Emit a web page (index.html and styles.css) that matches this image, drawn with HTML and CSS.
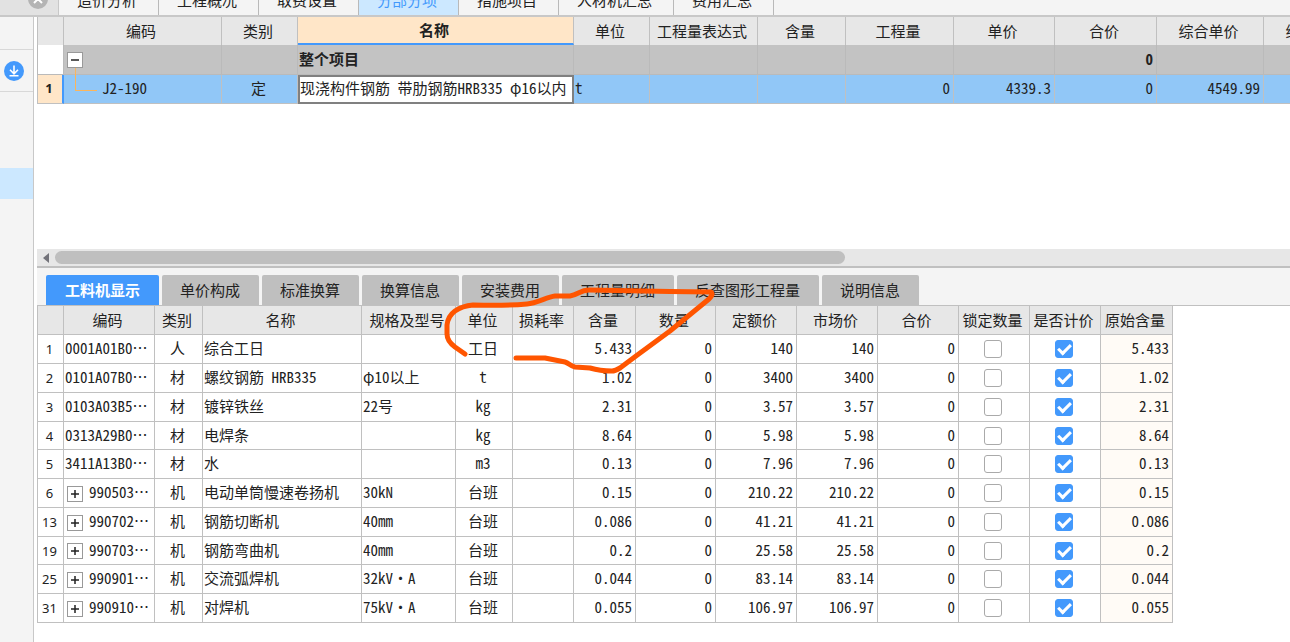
FILE: index.html
```html
<!DOCTYPE html>
<html lang="zh-CN">
<head>
<meta charset="utf-8">
<title>分部分项</title>
<link rel="stylesheet" href="styles.css">
</head>
<body>
<nav class="topbar">
  <span class="topbar-end"><button class="close" aria-label="关闭"><svg width="20" height="20" viewBox="0 0 20 20"><circle cx="10" cy="10" r="10" fill="#b4b4b4"/><path d="M6 6l8 8M14 6l-8 8" stroke="#fff" stroke-width="2"/></svg></button></span>
  <button class="toptab">造价分析</button>
  <button class="toptab">工程概况</button>
  <button class="toptab">取费设置</button>
  <button class="toptab current">分部分项</button>
  <button class="toptab">措施项目</button>
  <button class="toptab">人材机汇总</button>
  <button class="toptab">费用汇总</button>
</nav>
<div class="workspace">
  <aside class="side">
    <div class="side-head"></div>
    <div class="side-tool"><button class="download" aria-label="下载"><svg width="20" height="20" viewBox="0 0 20 20"><circle cx="10" cy="10" r="10" fill="#4399fc"/><path d="M10 4.500v8M6 8.800l4 4 4-4M5.500 14.800h9" fill="none" stroke="#fff" stroke-width="1.600"/></svg></button></div>
    <div class="side-gap"></div>
    <div class="side-selected"></div>
  </aside>
  <main class="main">
    <section class="upper">
      <table class="grid items">
        <colgroup><col class="w27"><col class="w158"><col class="w76"><col class="w276"><col class="w76"><col class="w108"><col class="w88"><col class="w108"><col class="w101"><col class="w102"><col class="w107"><col class="w107"></colgroup>
        <thead><tr><th></th><th>编码</th><th>类别</th><th class="sorted">名称</th><th>单位</th><th>工程量表达式</th><th>含量</th><th>工程量</th><th>单价</th><th>合价</th><th>综合单价</th><th>综合合价</th></tr></thead>
        <tbody>
          <tr class="total"><td class="idx"></td><td><button class="toggle open" aria-label="折叠"><svg width="14" height="14" viewBox="0 0 14 14"><path d="M3 7h8" stroke="#222" stroke-width="1.500"/></svg></button></td><td></td><td>整个项目</td><td></td><td></td><td></td><td></td><td></td><td class="n">0</td><td></td><td></td></tr>
          <tr class="active"><td class="idx">1</td><td class="leaf">J2-190</td><td class="c">定</td><td class="editing">现浇构件钢筋 带肋钢筋HRB335 φ16以内</td><td>t</td><td></td><td></td><td class="n">0</td><td class="n">4339.3</td><td class="n">0</td><td class="n">4549.99</td><td></td></tr>
        </tbody>
      </table>
    </section>
    <div class="scrollbar"><svg width="8" height="12" viewBox="0 0 8 12"><path d="M7 1v10L1 6z" fill="#73737a"/></svg><div class="thumb"></div></div>
    <section class="lower">
      <nav class="tabs">
        <button class="tab current">工料机显示</button><button class="tab">单价构成</button><button class="tab">标准换算</button><button class="tab">换算信息</button><button class="tab">安装费用</button><button class="tab">工程量明细</button><button class="tab">反查图形工程量</button><button class="tab">说明信息</button>
      </nav>
      <table class="grid parts">
        <colgroup><col class="w27"><col class="w91"><col class="w48"><col class="w159"><col class="w94"><col class="w57"><col class="w61"><col class="w62"><col class="w80"><col class="w81"><col class="w81"><col class="w81"><col class="w71"><col class="w71"><col class="w72"></colgroup>
        <thead><tr><th></th><th>编码</th><th>类别</th><th>名称</th><th>规格及型号</th><th>单位</th><th>损耗率</th><th>含量</th><th>数量</th><th>定额价</th><th>市场价</th><th>合价</th><th>锁定数量</th><th>是否计价</th><th>原始含量</th></tr></thead>
        <tbody>
          <tr><td class="idx">1</td><td>0001A01B0…</td><td class="c">人</td><td>综合工日</td><td></td><td class="c">工日</td><td></td><td class="n">5.433</td><td class="n">0</td><td class="n">140</td><td class="n">140</td><td class="n">0</td><td class="c"><input type="checkbox" aria-label="锁定数量"></td><td class="c"><input type="checkbox" aria-label="是否计价" checked></td><td class="n origin">5.433</td></tr>
          <tr><td class="idx">2</td><td>0101A07B0…</td><td class="c">材</td><td>螺纹钢筋 HRB335</td><td>φ10以上</td><td class="c">t</td><td></td><td class="n">1.02</td><td class="n">0</td><td class="n">3400</td><td class="n">3400</td><td class="n">0</td><td class="c"><input type="checkbox" aria-label="锁定数量"></td><td class="c"><input type="checkbox" aria-label="是否计价" checked></td><td class="n origin">1.02</td></tr>
          <tr><td class="idx">3</td><td>0103A03B5…</td><td class="c">材</td><td>镀锌铁丝</td><td>22号</td><td class="c">kg</td><td></td><td class="n">2.31</td><td class="n">0</td><td class="n">3.57</td><td class="n">3.57</td><td class="n">0</td><td class="c"><input type="checkbox" aria-label="锁定数量"></td><td class="c"><input type="checkbox" aria-label="是否计价" checked></td><td class="n origin">2.31</td></tr>
          <tr><td class="idx">4</td><td>0313A29B0…</td><td class="c">材</td><td>电焊条</td><td></td><td class="c">kg</td><td></td><td class="n">8.64</td><td class="n">0</td><td class="n">5.98</td><td class="n">5.98</td><td class="n">0</td><td class="c"><input type="checkbox" aria-label="锁定数量"></td><td class="c"><input type="checkbox" aria-label="是否计价" checked></td><td class="n origin">8.64</td></tr>
          <tr><td class="idx">5</td><td>3411A13B0…</td><td class="c">材</td><td>水</td><td></td><td class="c">m3</td><td></td><td class="n">0.13</td><td class="n">0</td><td class="n">7.96</td><td class="n">7.96</td><td class="n">0</td><td class="c"><input type="checkbox" aria-label="锁定数量"></td><td class="c"><input type="checkbox" aria-label="是否计价" checked></td><td class="n origin">0.13</td></tr>
          <tr><td class="idx">6</td><td><button class="toggle" aria-label="展开"><svg width="14" height="14" viewBox="0 0 14 14"><path d="M3 7h8M7 3v8" stroke="#222" stroke-width="1.500"/></svg></button>990503…</td><td class="c">机</td><td>电动单筒慢速卷扬机</td><td>30kN</td><td class="c">台班</td><td></td><td class="n">0.15</td><td class="n">0</td><td class="n">210.22</td><td class="n">210.22</td><td class="n">0</td><td class="c"><input type="checkbox" aria-label="锁定数量"></td><td class="c"><input type="checkbox" aria-label="是否计价" checked></td><td class="n origin">0.15</td></tr>
          <tr><td class="idx">13</td><td><button class="toggle" aria-label="展开"><svg width="14" height="14" viewBox="0 0 14 14"><path d="M3 7h8M7 3v8" stroke="#222" stroke-width="1.500"/></svg></button>990702…</td><td class="c">机</td><td>钢筋切断机</td><td>40mm</td><td class="c">台班</td><td></td><td class="n">0.086</td><td class="n">0</td><td class="n">41.21</td><td class="n">41.21</td><td class="n">0</td><td class="c"><input type="checkbox" aria-label="锁定数量"></td><td class="c"><input type="checkbox" aria-label="是否计价" checked></td><td class="n origin">0.086</td></tr>
          <tr><td class="idx">19</td><td><button class="toggle" aria-label="展开"><svg width="14" height="14" viewBox="0 0 14 14"><path d="M3 7h8M7 3v8" stroke="#222" stroke-width="1.500"/></svg></button>990703…</td><td class="c">机</td><td>钢筋弯曲机</td><td>40mm</td><td class="c">台班</td><td></td><td class="n">0.2</td><td class="n">0</td><td class="n">25.58</td><td class="n">25.58</td><td class="n">0</td><td class="c"><input type="checkbox" aria-label="锁定数量"></td><td class="c"><input type="checkbox" aria-label="是否计价" checked></td><td class="n origin">0.2</td></tr>
          <tr><td class="idx">25</td><td><button class="toggle" aria-label="展开"><svg width="14" height="14" viewBox="0 0 14 14"><path d="M3 7h8M7 3v8" stroke="#222" stroke-width="1.500"/></svg></button>990901…</td><td class="c">机</td><td>交流弧焊机</td><td>32kV·A</td><td class="c">台班</td><td></td><td class="n">0.044</td><td class="n">0</td><td class="n">83.14</td><td class="n">83.14</td><td class="n">0</td><td class="c"><input type="checkbox" aria-label="锁定数量"></td><td class="c"><input type="checkbox" aria-label="是否计价" checked></td><td class="n origin">0.044</td></tr>
          <tr><td class="idx">31</td><td><button class="toggle" aria-label="展开"><svg width="14" height="14" viewBox="0 0 14 14"><path d="M3 7h8M7 3v8" stroke="#222" stroke-width="1.500"/></svg></button>990910…</td><td class="c">机</td><td>对焊机</td><td>75kV·A</td><td class="c">台班</td><td></td><td class="n">0.055</td><td class="n">0</td><td class="n">106.97</td><td class="n">106.97</td><td class="n">0</td><td class="c"><input type="checkbox" aria-label="锁定数量"></td><td class="c"><input type="checkbox" aria-label="是否计价" checked></td><td class="n origin">0.055</td></tr>
        </tbody>
      </table>
    </section>
  </main>
</div>
<svg class="markup" width="280" height="96" viewBox="440 284 280 96" aria-hidden="true"><path d="M465 354L455 347Q447 341 447 334V325Q448 316 455 311Q462 306 473 305Q505 306 527 304C537 303 547 297 555 296L570 296C578 295 580 290 589 290L670 291.500L711 292Q714 294 709 299L670 331L636 356L620 368Q615 371 612 371Q600 371 590 368L575 367C570 366 569 363 565 362L545 358H516" fill="none" stroke="#ff5500" stroke-width="5" stroke-linecap="round" stroke-linejoin="round"/></svg>
</body>
</html>
```

FILE: styles.css
```css
* { box-sizing: border-box; }
body {
  margin: 0;
  min-height: 100vh;
  display: flex;
  flex-direction: column;
  overflow: hidden;
  background: #fff;
  color: #222;
  font-family: "Noto Sans Mono CJK SC", "Noto Sans CJK SC", sans-serif;
  font-size: 15px;
  line-height: 20px;
}
button { font: inherit; color: inherit; border: 0; padding: 0; background: none; flex: none; }
svg { display: block; }

/* document tabs, scrolled partly out of view */
.topbar {
  height: 17px;
  display: flex;
  align-items: flex-end;
  background: #f4f4f4;
  border-bottom: 2px solid #c8c8c8;
  overflow: hidden;
}
.topbar-end { width: 59px; height: 30px; padding: 4px 10px; display: flex; justify-content: flex-end; background: #e2e2e2; border-right: 1px solid #c8c8c8; }
.close { height: 20px; }
.toptab { height: 30px; padding: 0 21px 0 18px; border-right: 1px solid #b9b9b9; line-height: 30px; }
.toptab.current { background: #cce8ff; color: #4399fc; }

.workspace { flex: 1; display: flex; }
.side { width: 34px; flex: none; display: flex; flex-direction: column; background: #f4f4f4; border-right: 1px solid #c8c8c8; }
.side-head { height: 33px; border-bottom: 1px solid #d8d8d8; }
.side-tool { height: 42px; display: flex; align-items: center; padding-left: 4px; border-bottom: 1px solid #d8d8d8; }
.side-gap { height: 76px; }
.side-selected { height: 31px; background: #cce8ff; }

.main { flex: 1; min-width: 0; padding-left: 3px; display: flex; flex-direction: column; background: #fff; }
.upper { height: 232px; overflow: hidden; }

.grid { table-layout: fixed; width: 0; border-collapse: separate; border-spacing: 0; }
.grid th, .grid td { height: 29px; padding: 0 2px 2px 1px; border-right: 1px solid #c0c0c0; border-bottom: 1px solid #c0c0c0; white-space: nowrap; overflow: hidden; text-align: left; }
.grid th { padding: 0 3px 0 0; text-align: center; font-weight: 400; background: #e7e7e7; }
.grid tr > :first-child { border-left: 1px solid #c0c0c0; }
.grid .n { text-align: right; padding-right: 3px; }
.grid .c { text-align: center; padding-right: 3px; }
.grid .idx { padding: 0 2px 0 0; text-align: center; font-family: "Noto Sans", sans-serif; font-size: 13px; }

.items th { height: 28px; border-bottom-width: 0; }
.items .sorted { background: #ffe6c8; border-bottom: 2px solid #4399fc; font-weight: 700; }
.items .total td { height: 30px; background: #c3c3c3; border-color: #bababa; font-weight: 700; overflow: visible; }
.items .total .idx { background: #fff; }
.items .active td { padding-bottom: 3px; background: #91c7f7; }
.items .active .idx { background: #ffe6c8; border-right: 2px solid #4399fc; font-weight: 700; }
.items .active .leaf { padding-left: 38px; }
.items .active .editing { background: #fff; border: 2px solid #808080; padding-left: 0; }

.toggle { width: 16px; height: 16px; margin: 0 6px 0 2px; border: 1px solid #999; background: #fff; vertical-align: middle; position: relative; }
.toggle.open::after { content: ""; position: absolute; z-index: 1; left: 7px; top: 15px; width: 21px; height: 22px; border-left: 1px solid #fbb55c; border-bottom: 1px solid #fbb55c; }

.scrollbar { height: 17px; display: flex; align-items: center; gap: 5px; padding-left: 5px; background: #e7e7e7; }
.thumb { width: 63.3%; height: 13px; border-radius: 7px; background: #bfbfbf; }

.lower { flex: 1; border-top: 2px solid #c0c0c0; }
.tabs { display: flex; align-items: flex-end; gap: 3px; height: 38px; padding-left: 9px; background: #f4f4f4; border-bottom: 1px solid #c0c0c0; }
.tab { height: 30px; padding: 0 19px 0 18px; border-radius: 2px 2px 0 0; background: #bfbfbf; }
.tab.current { padding: 0 19px; background: #4399fc; color: #fff; font-weight: 700; }

.parts .origin { background: #fffbf6; }
.parts tr:nth-child(4n) td { height: 28px; }
input[type="checkbox"] {
  appearance: none;
  display: inline-grid;
  place-items: center;
  width: 18px;
  height: 18px;
  margin: 0;
  border: 1px solid #aaa;
  border-radius: 3px;
  background: #fff;
  vertical-align: middle;
}
input[type="checkbox"]:checked { border-color: #4399fc; background: #4399fc; }
input[type="checkbox"]:checked::after { content: ""; box-sizing: border-box; width: 13px; height: 8px; border-left: 3px solid #fff; border-bottom: 3px solid #fff; transform: translateY(-1px) rotate(-45deg); }

.w27 { width: 27px; } .w48 { width: 48px; } .w57 { width: 57px; } .w61 { width: 61px; }
.w62 { width: 62px; } .w71 { width: 71px; } .w72 { width: 72px; } .w76 { width: 76px; }
.w80 { width: 80px; } .w81 { width: 81px; } .w88 { width: 88px; } .w91 { width: 91px; }
.w94 { width: 94px; } .w101 { width: 101px; } .w102 { width: 102px; } .w107 { width: 107px; }
.w108 { width: 108px; } .w158 { width: 158px; } .w159 { width: 159px; } .w276 { width: 276px; }

/* freehand highlight over the unit and content columns */
.markup { position: absolute; left: 440px; top: 284px; pointer-events: none; }
```
